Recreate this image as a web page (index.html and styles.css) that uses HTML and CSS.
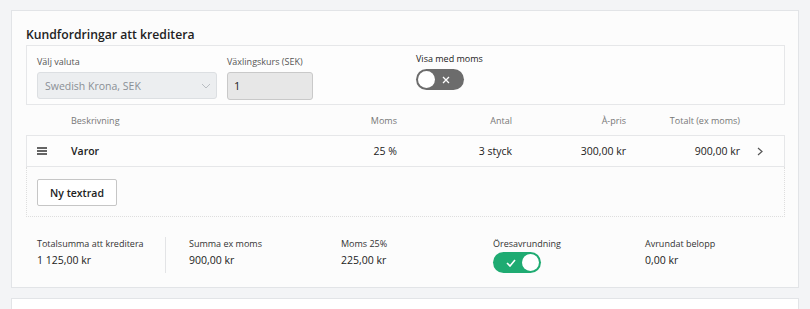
FILE: index.html
```html
<!DOCTYPE html>
<html lang="sv">
  <head>
    <meta charset="UTF-8" />
    <meta name="viewport" content="width=device-width, initial-scale=1.0" />
    <title>Kundfordringar att kreditera</title>
    <link rel="stylesheet" href="styles.css">
  </head>
  <body>
    <!-- Kort: kundfordringar -->
    <div class="card">
      <h2 class="card-title">Kundfordringar att kreditera</h2>

      <div class="form-box">
        <div class="field field-currency">
          <label>Välj valuta</label>
          <div class="select">
            <span>Swedish Krona, SEK</span>
            <svg class="select-arrow" width="10" height="6" viewBox="0 0 10 6">
              <path d="M1 1 L5 5 L9 1" fill="none" stroke="#b9bdc2" stroke-width="1" />
            </svg>
          </div>
        </div>
        <div class="field field-rate">
          <label>Växlingskurs (SEK)</label>
          <div class="input">1</div>
        </div>
        <div class="field field-vat">
          <label>Visa med moms</label>
          <div class="toggle toggle-off">
            <span class="knob"></span>
            <svg class="toggle-icon" width="8" height="8" viewBox="0 0 8 8">
              <path d="M1 1 L7 7 M7 1 L1 7" stroke="#fff" stroke-width="1.3" />
            </svg>
          </div>
        </div>
      </div>

      <!-- Tabell med rader -->
      <div class="table">
        <div class="row row-head">
          <span></span>
          <span>Beskrivning</span>
          <span class="num">Moms</span>
          <span class="num">Antal</span>
          <span class="num">À-pris</span>
          <span class="num">Totalt (ex moms)</span>
          <span></span>
        </div>
        <div class="row row-item">
          <span class="handle">
            <svg width="10" height="8" viewBox="0 0 10 8">
              <path d="M0 1 H10 M0 4 H10 M0 7 H10" stroke="#333" stroke-width="1.4" />
            </svg>
          </span>
          <span class="desc">Varor</span>
          <span class="num">25 %</span>
          <span class="num">3 styck</span>
          <span class="num">300,00 kr</span>
          <span class="num">900,00 kr</span>
          <span class="chevron">
            <svg width="6" height="9" viewBox="0 0 6 9">
              <path d="M1 1 L5 4.5 L1 8" fill="none" stroke="#555" stroke-width="1.2" />
            </svg>
          </span>
        </div>
        <div class="add-area">
          <button class="btn">Ny textrad</button>
        </div>
      </div>

      <!-- Summering -->
      <div class="summary">
        <div class="sum sum-first">
          <div class="sum-label">Totalsumma att kreditera</div>
          <div class="sum-value">1 125,00 kr</div>
        </div>
        <div class="sum">
          <div class="sum-label">Summa ex moms</div>
          <div class="sum-value">900,00 kr</div>
        </div>
        <div class="sum">
          <div class="sum-label">Moms 25%</div>
          <div class="sum-value">225,00 kr</div>
        </div>
        <div class="sum">
          <div class="sum-label">Öresavrundning</div>
          <div class="toggle toggle-on">
            <svg class="toggle-icon" width="10" height="8" viewBox="0 0 10 8">
              <path d="M1 4 L4 7 L9 1" fill="none" stroke="#fff" stroke-width="1.6" />
            </svg>
            <span class="knob"></span>
          </div>
        </div>
        <div class="sum sum-last">
          <div class="sum-label">Avrundat belopp</div>
          <div class="sum-value">0,00 kr</div>
        </div>
      </div>
    </div>

    <div class="card card-next"></div>
  </body>
</html>
```

FILE: styles.css
```css
/* Grund */
body {
  font-family: 'Open Sans', 'Noto Sans', sans-serif;
  background: #f3f4f6;
  margin: 0;
  padding: 10px 11px 0;
  color: #222;
  overflow: hidden;
}

.card {
  background: #fcfcfc;
  border: 1px solid #e2e4e7;
  padding: 0 13px 14px 14px;
}

.card-next {
  margin-top: 10px;
  height: 30px;
  background: #fff;
}

.card-title {
  margin: 15px 0 1px;
  font-size: 12.2px;
  line-height: 18px;
  font-weight: 600;
  color: #222;
}

/* Formulär */
.form-box {
  display: flex;
  gap: 10px;
  border: 1px solid #e6e7e9;
  background: #fdfdfd;
  padding: 9px 10px 4px;
}

.field label {
  display: block;
  font-size: 9px;
  line-height: 14px;
  color: #555;
  margin-bottom: 3px;
}

.field-currency {
  width: 180px;
}

.field-rate {
  width: 86px;
}

.field-vat {
  margin-left: 93px;
}

.field-vat label {
  color: #222;
  margin-top: -3px;
}

.select {
  display: flex;
  align-items: center;
  justify-content: space-between;
  height: 27px;
  box-sizing: border-box;
  padding: 0 5px 0 7px;
  background: #eceef0;
  border: 1px solid #dcdfe2;
  border-radius: 3px;
  font-size: 10.5px;
  color: #8a8f95;
}

.input {
  height: 28px;
  box-sizing: border-box;
  padding: 0 6px;
  line-height: 26px;
  background: #e7e7e7;
  border: 1px solid #c9c9c9;
  border-radius: 3px;
  font-size: 11px;
  color: #222;
}

/* Brytare */
.toggle {
  display: flex;
  align-items: center;
  justify-content: space-between;
  width: 48px;
  height: 21px;
  box-sizing: border-box;
  border-radius: 11px;
  padding: 0 2px;
}

.toggle .knob {
  width: 17px;
  height: 17px;
  border-radius: 50%;
  background: #fff;
}

.toggle-off {
  background: #6c6c6c;
  padding-right: 14px;
}

.toggle-on {
  background: #1fab72;
  padding-left: 13px;
}

/* Tabell */
.row {
  display: grid;
  grid-template-columns: 34px 1fr 100px 115px 114px 114px 44px;
  align-items: center;
  padding-left: 10px;
  border: 1px solid transparent;
}

.row-head {
  height: 30px;
  box-sizing: border-box;
  border-bottom: none;
  font-size: 9px;
  color: #777;
}

.row-item {
  height: 32px;
  box-sizing: border-box;
  border-color: #e6e7e9;
  background: #fdfdfd;
  font-size: 10.5px;
  color: #222;
}

.num {
  text-align: right;
}

.handle,
.chevron {
  display: flex;
  align-items: center;
}

.chevron {
  padding-left: 17px;
}

.desc {
  font-weight: 600;
}

.add-area {
  border: 1px dotted #dedede;
  border-top: none;
  padding: 12px 10px 10px;
}

.btn {
  width: 80px;
  height: 27px;
  padding: 0;
  background: #fff;
  border: 1px solid #c6c6c6;
  border-radius: 2px;
  font-family: 'Open Sans', 'Noto Sans', sans-serif;
  font-size: 10.5px;
  font-weight: 600;
  color: #222;
}

/* Summering */
.summary {
  display: flex;
  padding: 20px 0 0 11px;
}

.sum {
  flex: none;
  width: 152px;
}

.sum-first {
  width: 128px;
  margin-right: 23px;
  border-right: 1px solid #e3e4e6;
}

.sum-last {
  flex: 1;
  width: auto;
}

.sum-label {
  font-size: 9px;
  line-height: 14px;
  color: #333;
}

.sum-value {
  font-size: 10.5px;
  line-height: 16px;
  margin-top: 1px;
  color: #222;
}

.sum .toggle {
  margin-top: 1px;
}
```
